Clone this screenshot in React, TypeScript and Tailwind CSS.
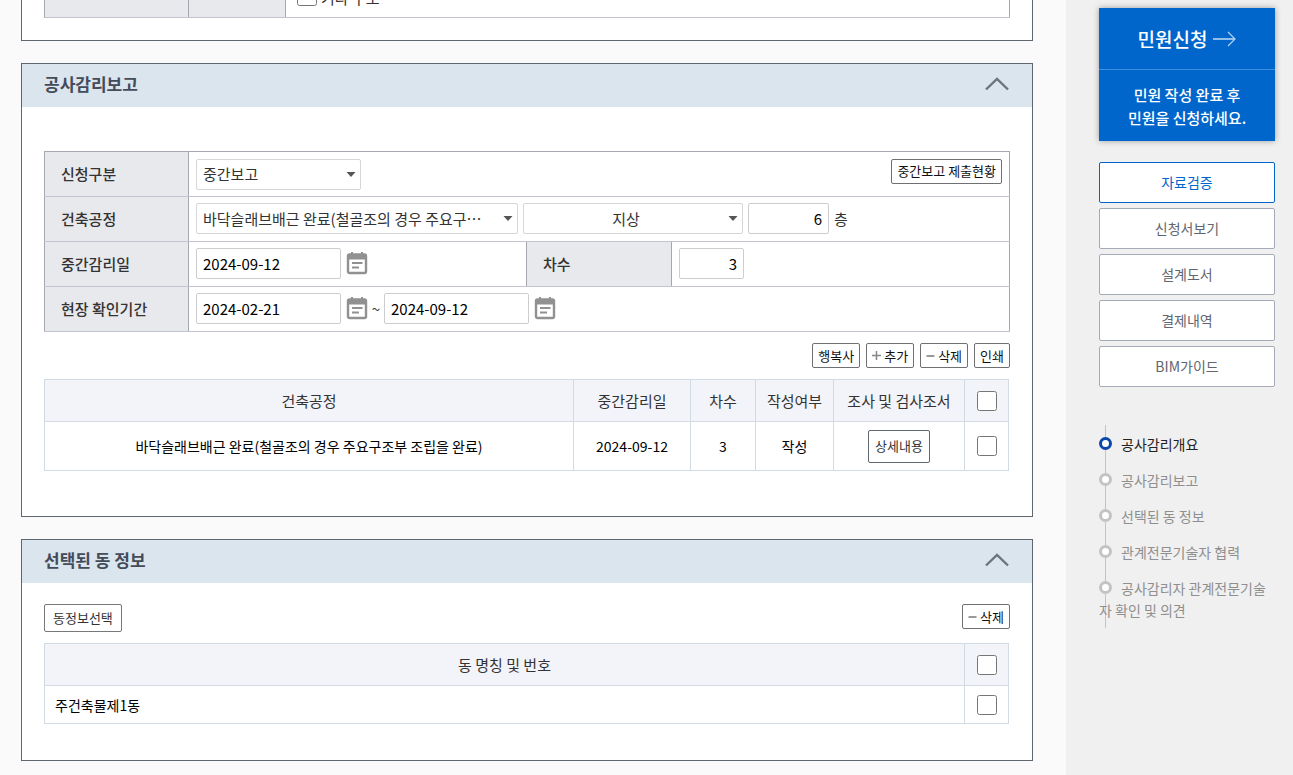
import { useState, type ReactNode } from 'react';

const steps = [
  '공사감리개요',
  '공사감리보고',
  '선택된 동 정보',
  '관계전문기술자 협력',
  '공사감리자 관계전문기술자 확인 및 의견',
];

const sideButtons = ['자료검증', '신청서보기', '설계도서', '결제내역', 'BIM가이드'];

const labelCell = 'border border-[#a6a8b0] border-y-[#c3c3cf] bg-[#e8e9ed] px-4 text-left font-medium';
const valueCell = 'border-y border-[#c3c3cf] px-[7px] pb-px';
const headCell = 'h-[42px] border border-[#d3dbe2] font-normal text-[15px]';
const bodyCell = 'border border-[#d3dbe2] text-center text-black';
const fieldBox = 'h-[31px] rounded-xs border border-[#cdcdcf] bg-white px-[6px] text-[15px]';
const smallButton =
  'flex h-[25px] items-center justify-center gap-[3px] rounded-xs border border-[#6f7074] bg-white px-[5px] text-[13px] text-[#111]';

function CalendarButton({ label }: { label: string }) {
  return (
    <button type="button" aria-label={label} className="ml-[5px] shrink-0">
      <svg width="22" height="24" viewBox="0 0 22 24" fill="none">
        <path d="M6 0v3M16 0v3" stroke="#919191" strokeWidth="2" />
        <rect x="2" y="2.5" width="18" height="18.5" rx="1.5" stroke="#919191" strokeWidth="2.4" />
        <path d="M2 2h18v5.5H2z" fill="#919191" />
        <path d="M6 11h10.5M6 15.5h7" stroke="#919191" strokeWidth="2" />
      </svg>
    </button>
  );
}

function SelectBox({ label, value, className }: { label: string; value: string; className: string }) {
  return (
    <div className={`relative shrink-0 ${className}`}>
      <select
        aria-label={label}
        className="h-[31px] w-full appearance-none truncate rounded-xs border border-[#d6d6d8] bg-white pr-[20px] pl-[6px] text-[15px] [text-align:inherit]"
      >
        <option>{value}</option>
      </select>
      <svg className="pointer-events-none absolute top-[13px] right-[5px]" width="10" height="6" viewBox="0 0 10 6">
        <path d="M.5 0h9L5 5z" fill="#555" />
      </svg>
    </div>
  );
}

function Panel({ title, children }: { title: string; children: ReactNode }) {
  const [open, setOpen] = useState(true);

  return (
    <section className="mt-[22px] border border-[#5f6670] bg-white">
      <div className="flex h-[43px] items-center justify-between bg-[#dbe5ee] px-[22px] pb-[3px]">
        <h2 className="text-[17px] font-bold text-[#444b59]">{title}</h2>
        <button type="button" aria-label={`${title} 접기`} aria-expanded={open} onClick={() => setOpen(!open)}>
          <svg width="26" height="16" viewBox="0 0 26 16" fill="none">
            <path d="M2 13.5 13 3l11 10.5" stroke="#6c757e" strokeWidth="2.4" />
          </svg>
        </button>
      </div>
      {open && children}
    </section>
  );
}

function Check({ label }: { label: string }) {
  return <input type="checkbox" aria-label={label} className="block size-5 shrink-0" />;
}

function Minus() {
  return (
    <svg width="9" height="9" viewBox="0 0 9 9">
      <path d="M.5 5h8" stroke="#999" strokeWidth="2" />
    </svg>
  );
}

function Plus() {
  return (
    <svg width="9" height="9" viewBox="0 0 9 9">
      <path d="M0 4.5h9M4.5 0v9" stroke="#888" strokeWidth="1.5" />
    </svg>
  );
}

export default function App() {
  return (
    <div className="flex min-h-screen bg-[#fafafa] font-['Noto_Sans_CJK_KR',sans-serif] text-[15px] leading-[22px] text-[#333]">
      <main className="min-w-0 flex-1 pr-[33px] pb-[14px] pl-[21px]">
        {/* 이전 섹션 하단 */}
        <section className="flex h-[41px] flex-col justify-end overflow-hidden border border-t-0 border-[#5f6670] bg-white px-[22px] pb-[22px]">
          <div className="flex h-[45px] shrink-0 border border-[#a6a8b0] border-b-[#c3c3cf]">
            <div className="w-[144px] border-r border-[#a6a8b0] bg-[#e8e9ed]" />
            <div className="w-[97px] border-r border-[#a6a8b0] bg-[#e8e9ed]" />
            <label className="flex items-center gap-1 pl-[11px]">
              <input type="checkbox" className="size-5" />
              <span className="pt-1">기타 구조</span>
            </label>
          </div>
        </section>

        {/* 공사감리보고 */}
        <Panel title="공사감리보고">
          <div className="px-[22px] pt-11 pb-[45px]">
            <table className="w-full table-fixed border-collapse border border-[#a6a8b0]">
              <colgroup>
                <col className="w-[144px]" />
                <col className="w-[338px]" />
                <col className="w-[145px]" />
                <col />
              </colgroup>
              <tbody>
                <tr className="h-[45px] *:border-t-[#a6a8b0]">
                  <th className={labelCell}>신청구분</th>
                  <td className="border-y border-[#c3c3cf] px-[7px]" colSpan={3}>
                    <div className="flex items-start justify-between">
                      <SelectBox label="신청구분" value="중간보고" className="w-[165px]" />
                      <button type="button" className={smallButton}>중간보고 제출현황</button>
                    </div>
                  </td>
                </tr>
                <tr className="h-[45px]">
                  <th className={labelCell}>건축공정</th>
                  <td className={valueCell} colSpan={3}>
                    <div className="flex items-center gap-[5px]">
                      <SelectBox
                        label="건축공정"
                        value="바닥슬래브배근 완료(철골조의 경우 주요구⋯"
                        className="w-[322px]"
                      />
                      <SelectBox label="지상/지하" value="지상" className="w-[220px] text-center" />
                      <input aria-label="층수" defaultValue="6" className={`${fieldBox} w-[81px] text-right text-black`} />
                      <span>층</span>
                    </div>
                  </td>
                </tr>
                <tr className="h-[45px]">
                  <th className={labelCell}>중간감리일</th>
                  <td className={valueCell}>
                    <div className="flex items-center">
                      <input aria-label="중간감리일" defaultValue="2024-09-12" className={`${fieldBox} w-[145px] text-black`} />
                      <CalendarButton label="중간감리일 선택" />
                    </div>
                  </td>
                  <th className={labelCell}>차수</th>
                  <td className={valueCell}>
                    <input aria-label="차수" defaultValue="3" className={`${fieldBox} block w-[65px] text-right text-black`} />
                  </td>
                </tr>
                <tr className="h-[45px]">
                  <th className={labelCell}>현장 확인기간</th>
                  <td className={valueCell} colSpan={3}>
                    <div className="flex items-center">
                      <input aria-label="확인 시작일" defaultValue="2024-02-21" className={`${fieldBox} w-[145px] text-black`} />
                      <CalendarButton label="시작일 선택" />
                      <span className="w-4 text-center">~</span>
                      <input aria-label="확인 종료일" defaultValue="2024-09-12" className={`${fieldBox} w-[145px] text-black`} />
                      <CalendarButton label="종료일 선택" />
                    </div>
                  </td>
                </tr>
              </tbody>
            </table>

            <div className="mt-[11px] mb-[11px] flex justify-end gap-[6px]">
              <button type="button" className={smallButton}>행복사</button>
              <button type="button" className={smallButton}><Plus />추가</button>
              <button type="button" className={smallButton}><Minus />삭제</button>
              <button type="button" className={smallButton}>인쇄</button>
            </div>

            <div className="pr-px">
              <table className="w-full table-fixed border-collapse text-[14px]">
                <colgroup>
                  <col />
                  <col className="w-[117px]" />
                  <col className="w-[65px]" />
                  <col className="w-[78px]" />
                  <col className="w-[131px]" />
                  <col className="w-[44px]" />
                </colgroup>
                <thead className="bg-[#f2f4f9]">
                  <tr>
                    <th className={headCell}>건축공정</th>
                    <th className={headCell}>중간감리일</th>
                    <th className={headCell}>차수</th>
                    <th className={headCell}>작성여부</th>
                    <th className={headCell}>조사 및 검사조서</th>
                    <th className={headCell}>
                      <div className="flex justify-center"><Check label="전체 선택" /></div>
                    </th>
                  </tr>
                </thead>
                <tbody>
                  <tr className="h-[49px]">
                    <td className={bodyCell}>바닥슬래브배근 완료(철골조의 경우 주요구조부 조립을 완료)</td>
                    <td className={bodyCell}>2024-09-12</td>
                    <td className={bodyCell}>3</td>
                    <td className={bodyCell}>작성</td>
                    <td className={bodyCell}>
                      <button type="button" className="h-[33px] rounded-xs border border-[#5f6670] bg-white px-[6px] text-[13px] text-[#333]">
                        상세내용
                      </button>
                    </td>
                    <td className={bodyCell}>
                      <div className="flex justify-center"><Check label="행 선택" /></div>
                    </td>
                  </tr>
                </tbody>
              </table>
            </div>
          </div>
        </Panel>

        {/* 선택된 동 정보 */}
        <Panel title="선택된 동 정보">
          <div className="px-[22px] pt-[21px] pb-9">
            <div className="mb-[11px] flex items-start justify-between">
              <button type="button" className="h-7 rounded-xs border border-[#77787c] bg-white px-2 text-[13px]">
                동정보선택
              </button>
              <button type="button" className={smallButton}><Minus />삭제</button>
            </div>
            <div className="pr-px">
              <table className="w-full table-fixed border-collapse text-[14px]">
                <colgroup>
                  <col />
                  <col className="w-[44px]" />
                </colgroup>
                <thead className="bg-[#f2f4f9]">
                  <tr>
                    <th className={headCell}>동 명칭 및 번호</th>
                    <th className={headCell}>
                      <div className="flex justify-center"><Check label="동 전체 선택" /></div>
                    </th>
                  </tr>
                </thead>
                <tbody>
                  <tr className="h-[38px]">
                    <td className="border border-[#d3dbe2] px-[10px] text-black">주건축물제1동</td>
                    <td className={bodyCell}>
                      <div className="flex justify-center"><Check label="동 선택" /></div>
                    </td>
                  </tr>
                </tbody>
              </table>
            </div>
          </div>
        </Panel>
      </main>

      {/* 우측 메뉴 */}
      <aside className="w-[227px] shrink-0 bg-[#f0f0f0] pt-2 pr-[18px] pl-[33px]">
        <button type="button" className="block w-full bg-[#0066cc] text-white shadow-[0_0_6px_rgba(0,0,0,0.35)]">
          <span className="flex h-[62px] items-center justify-center gap-[6px] border-b border-[#3d8fdf] text-[19px] font-medium">
            민원신청
            <svg width="23" height="16" viewBox="0 0 23 16" fill="none">
              <path d="M0 8h22" stroke="#8fbdec" strokeWidth="2" />
              <path d="m15 1 7 7-7 7" stroke="#b5d4f3" strokeWidth="1.2" />
            </svg>
          </span>
          <span className="block pt-[13px] pb-3 text-[15px] leading-[23px] font-medium">
            민원 작성 완료 후
            <br />
            민원을 신청하세요.
          </span>
        </button>

        <div className="mt-[21px] flex flex-col gap-[5px]">
          {sideButtons.map((name, i) => (
            <button
              key={name}
              type="button"
              className={`h-[41px] rounded-xs border bg-white pb-0.5 text-[14px] ${
                i === 0 ? 'border-[#0066cc] text-[#0066cc]' : 'border-[#a4aab8] text-[#5f6670]'
              }`}
            >
              {name}
            </button>
          ))}
        </div>

        <ul className="relative mt-[38px] flex flex-col gap-[14px] pt-2 pb-[7px] text-[14px]">
          <li aria-hidden="true" className="absolute inset-y-0 left-[6px] w-px bg-[#c3c3c3]" />
          {steps.map((step, i) => (
            <li key={step} className="relative">
              <a href="#" className={i === 0 ? 'text-[#222]' : 'text-[#8f8f8f]'}>
                <span
                  className={`mr-[9px] inline-block size-[13px] rounded-full border-[3px] bg-white ${
                    i === 0 ? 'border-[#0b47a8]' : 'border-[#c3c3c3]'
                  }`}
                />
                {step}
              </a>
            </li>
          ))}
        </ul>
      </aside>
    </div>
  );
}
